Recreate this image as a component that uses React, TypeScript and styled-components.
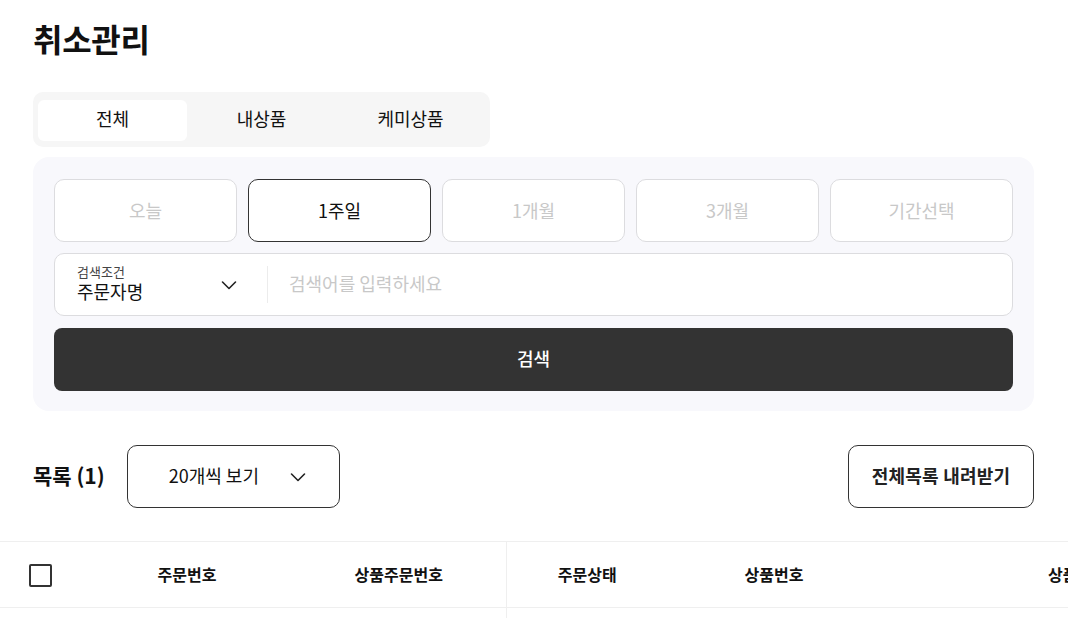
import React, { useState } from 'react';
import styled, { createGlobalStyle } from 'styled-components';

const GlobalStyle = createGlobalStyle`
  body {
    margin: 0;
    background: #fff;
    font-family: "Noto Sans CJK KR", "Noto Sans", sans-serif;
    color: #111;
  }
  * {
    box-sizing: border-box;
  }
`;

const STDPage = styled.div`
  width: 1001px;
  margin-left: 33px;
  padding-top: 16px;
`;

const STDTitle = styled.h1`
  margin: 0;
  font-size: 32px;
  line-height: 44px;
  font-weight: 700;
  letter-spacing: -0.3px;
`;

const STDTabBar = styled.div`
  display: inline-flex;
  margin-top: 32px;
  padding: 8px 5px 6px;
  background: #f6f6f6;
  border-radius: 10px;
`;

const STDTab = styled.button<{ $active?: boolean }>`
  width: 149px;
  height: 41px;
  padding: 0 0 5px;
  border: 0;
  border-radius: 6px;
  background: ${({ $active }) => ($active ? '#fff' : 'transparent')};
  font-family: inherit;
  font-size: 18px;
  color: #111;
  cursor: pointer;
`;

const STDFilterPanel = styled.div`
  margin-top: 10px;
  padding: 22px 21px 20px;
  background: #f8f8fc;
  border-radius: 16px;
  display: flex;
  flex-direction: column;
  gap: 11px;
`;

const STDPeriodGrid = styled.div`
  display: grid;
  grid-template-columns: repeat(5, 1fr);
  gap: 11px;
`;

const STDPeriodButton = styled.button<{ $active?: boolean }>`
  height: 63px;
  padding: 0 0 2px;
  border: 1px solid ${({ $active }) => ($active ? '#333' : '#dcdcdf')};
  border-radius: 10px;
  background: #fff;
  font-family: inherit;
  font-size: 18px;
  color: ${({ $active }) => ($active ? '#111' : '#c8c8c8')};
  cursor: pointer;
`;

const STDSearchRow = styled.div`
  display: flex;
  align-items: center;
  height: 63px;
  background: #fff;
  border: 1px solid #dcdcdf;
  border-radius: 10px;
`;

const STDCondition = styled.div`
  display: flex;
  align-items: center;
  justify-content: space-between;
  width: 213px;
  height: 37px;
  padding: 0 29px 0 22px;
  border-right: 1px solid #ececec;
`;

const STDConditionText = styled.div`
  display: flex;
  flex-direction: column;
  margin-top: -3px;

  span {
    font-size: 13px;
    line-height: 16px;
    color: #444;
  }

  strong {
    font-size: 18px;
    line-height: 22px;
    font-weight: 400;
    color: #111;
  }
`;

const STDSearchInput = styled.input`
  flex: 1;
  height: 100%;
  border: 0;
  outline: none;
  background: transparent;
  padding: 0 21px 4px;
  font-family: inherit;
  font-size: 18px;
  color: #111;

  &::placeholder {
    color: #c8c8c8;
  }
`;

const STDSearchButton = styled.button`
  height: 63px;
  margin-top: 1px;
  padding: 0 0 3px;
  border: 0;
  border-radius: 8px;
  background: #333;
  color: #fff;
  font-family: inherit;
  font-size: 18px;
  font-weight: 500;
  cursor: pointer;
`;

const STDListBar = styled.div`
  display: flex;
  align-items: center;
  margin-top: 34px;
  height: 63px;
`;

const STDListTitle = styled.h2`
  margin: 0 22px 0 0;
  padding-bottom: 3px;
  font-size: 21px;
  font-weight: 700;
`;

const STDPageSize = styled.button`
  display: flex;
  align-items: center;
  justify-content: space-between;
  width: 213px;
  height: 63px;
  padding: 0 32px 3px 41px;
  border: 1px solid #333;
  border-radius: 10px;
  background: #fff;
  font-family: inherit;
  font-size: 18px;
  color: #111;

  svg {
    margin-top: 3px;
  }
`;

const STDDownloadButton = styled.button`
  margin-left: auto;
  width: 186px;
  height: 63px;
  padding: 0 0 3px;
  border: 1px solid #333;
  border-radius: 10px;
  background: #fff;
  font-family: inherit;
  font-size: 18px;
  font-weight: 700;
  letter-spacing: 0.2px;
  color: #222;
`;

const STDTableWrap = styled.div`
  width: 1068px;
  margin: 33px 0 0 -33px;
  overflow: hidden;
`;

const STDTable = styled.table`
  width: 1460px;
  table-layout: fixed;
  border-collapse: collapse;

  th {
    height: 66px;
    padding: 0 0 2px;
    border-top: 1px solid #efefef;
    border-bottom: 1px solid #efefef;
    font-size: 16px;
    font-weight: 700;
    color: #111;
    text-align: center;
  }

  td {
    height: 40px;
  }

  .split {
    border-right: 1px solid #efefef;
  }
`;

const STDCheckbox = styled.span`
  display: inline-block;
  width: 23px;
  height: 23px;
  margin-left: -1px;
  vertical-align: middle;
  border: 2px solid #333;
  border-radius: 2px;
`;

const Chevron: React.FC = () => (
  <svg width="18" height="18" viewBox="0 0 18 18" fill="none">
    <polyline points="2.5,6 9,12.5 15.5,6" stroke="#222" strokeWidth="1.6" strokeLinejoin="round" strokeLinecap="round" />
  </svg>
);

const tabs = ['전체', '내상품', '케미상품'];
const periods = ['오늘', '1주일', '1개월', '3개월', '기간선택'];
const columns = [
  { label: '', width: 82 },
  { label: '주문번호', width: 210 },
  { label: '상품주문번호', width: 214 },
  { label: '주문상태', width: 162 },
  { label: '상품번호', width: 212 },
  { label: '상품명', width: 380 },
  { label: '수량', width: 200 },
];

const App: React.FC = () => {
  const [tab, setTab] = useState(0);
  const [period, setPeriod] = useState(1);

  return (
    <>
      <GlobalStyle />
      <STDPage>
        <STDTitle>취소관리</STDTitle>
        <STDTabBar>
          {tabs.map((t, i) => (
            <STDTab key={t} $active={tab === i} onClick={() => setTab(i)}>
              {t}
            </STDTab>
          ))}
        </STDTabBar>
        <STDFilterPanel>
          <STDPeriodGrid>
            {periods.map((p, i) => (
              <STDPeriodButton key={p} $active={period === i} onClick={() => setPeriod(i)}>
                {p}
              </STDPeriodButton>
            ))}
          </STDPeriodGrid>
          <STDSearchRow>
            <STDCondition>
              <STDConditionText>
                <span>검색조건</span>
                <strong>주문자명</strong>
              </STDConditionText>
              <Chevron />
            </STDCondition>
            <STDSearchInput placeholder="검색어를 입력하세요" />
          </STDSearchRow>
          <STDSearchButton>검색</STDSearchButton>
        </STDFilterPanel>
        <STDListBar>
          <STDListTitle>목록 (1)</STDListTitle>
          <STDPageSize>
            20개씩 보기
            <Chevron />
          </STDPageSize>
          <STDDownloadButton>전체목록 내려받기</STDDownloadButton>
        </STDListBar>
        <STDTableWrap>
          <STDTable>
            <colgroup>
              {columns.map((c, i) => (
                <col key={i} style={{ width: c.width }} />
              ))}
            </colgroup>
            <thead>
              <tr>
                {columns.map((c, i) => (
                  <th key={i} className={i === 2 ? 'split' : undefined}>
                    {i === 0 ? <STDCheckbox /> : c.label}
                  </th>
                ))}
              </tr>
            </thead>
            <tbody>
              <tr>
                {columns.map((c, i) => (
                  <td key={i} className={i === 2 ? 'split' : undefined} />
                ))}
              </tr>
            </tbody>
          </STDTable>
        </STDTableWrap>
      </STDPage>
    </>
  );
};

export default App;
